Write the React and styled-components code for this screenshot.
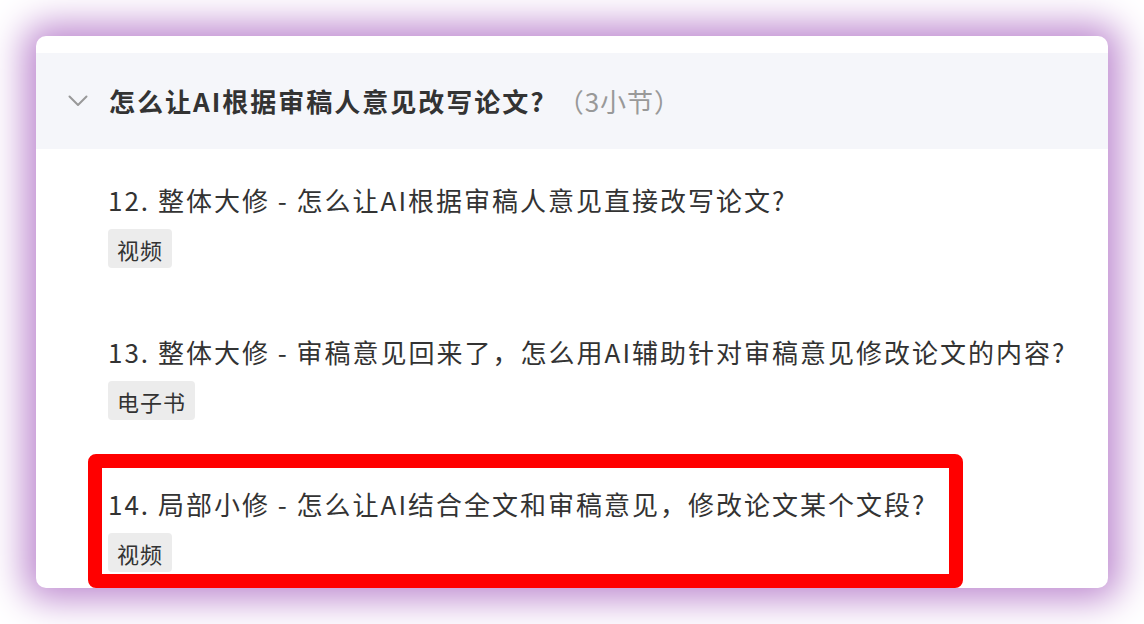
import React from "react";
import styled, { createGlobalStyle } from "styled-components";

const Global = createGlobalStyle`
  html, body { margin: 0; padding: 0; background: #ffffff; }
  body { font-family: "Noto Sans CJK SC", "Noto Sans", sans-serif; }
  * { box-sizing: border-box; }
`;

const Page = styled.div`
  width: 1144px;
  height: 624px;
  padding: 36px 36px 0 36px;
  overflow: hidden;
`;

const Card = styled.div`
  position: relative;
  width: 1072px;
  height: 552px;
  background: #ffffff;
  border-radius: 10px;
  padding-top: 17px;
  box-shadow: 0 0 36px 12px rgba(190, 138, 208, 1);
`;

const Clip = styled.div`
  height: 100%;
  overflow: hidden;
  border-radius: 0 0 10px 10px;
`;

const Header = styled.div`
  height: 96px;
  background: #f5f6fa;
  display: flex;
  align-items: center;
  padding-left: 32px;
`;

const Chevron = styled.svg`
  width: 20px;
  height: 12px;
  margin-right: 21px;
  flex-shrink: 0;
`;

const Title = styled.span`
  font-size: 26px;
  font-weight: 700;
  color: #333333;
  line-height: 36px;
  letter-spacing: 2px;
`;

const Count = styled.span`
  font-size: 26px;
  font-weight: 400;
  color: #999999;
  line-height: 36px;
  letter-spacing: 1px;
  margin-left: 12px;
`;

const List = styled.div`
  display: flex;
  flex-direction: column;
  padding-left: 72px;
`;

const Item = styled.div`
  padding: 33px 0;
  display: flex;
  flex-direction: column;
  align-items: flex-start;
`;

const ItemTitle = styled.div`
  font-size: 26px;
  line-height: 36px;
  color: #333333;
  letter-spacing: 2px;
  margin-bottom: 11px;
  white-space: nowrap;
`;

const Tag = styled.span`
  display: inline-flex;
  align-items: center;
  height: 39px;
  padding: 0 9px;
  background: #ececec;
  border-radius: 4px;
  font-size: 22px;
  letter-spacing: 1px;
  color: #333333;
`;

const Highlight = styled.div`
  position: absolute;
  left: 52px;
  top: 418px;
  width: 875px;
  height: 134px;
  border: 14px solid #ff0000;
  border-radius: 8px;
  pointer-events: none;
`;

const items = [
  { title: "12. 整体大修 - 怎么让AI根据审稿人意见直接改写论文?", tag: "视频" },
  { title: "13. 整体大修 - 审稿意见回来了，怎么用AI辅助针对审稿意见修改论文的内容?", tag: "电子书" },
  { title: "14. 局部小修 - 怎么让AI结合全文和审稿意见，修改论文某个文段?", tag: "视频" },
];

export default function App() {
  return (
    <>
      <Global />
      <Page>
        <Card>
          <Clip>
            <Header>
              <Chevron viewBox="0 0 20 12" fill="none">
                <path d="M1.5 1.5 L10 10 L18.5 1.5" stroke="#999999" strokeWidth="2" strokeLinecap="round" strokeLinejoin="round" />
              </Chevron>
              <Title>怎么让AI根据审稿人意见改写论文?</Title>
              <Count>（3小节）</Count>
            </Header>
            <List>
              {items.map((it) => (
                <Item key={it.title}>
                  <ItemTitle>{it.title}</ItemTitle>
                  <Tag>{it.tag}</Tag>
                </Item>
              ))}
            </List>
          </Clip>
          <Highlight />
        </Card>
      </Page>
    </>
  );
}
